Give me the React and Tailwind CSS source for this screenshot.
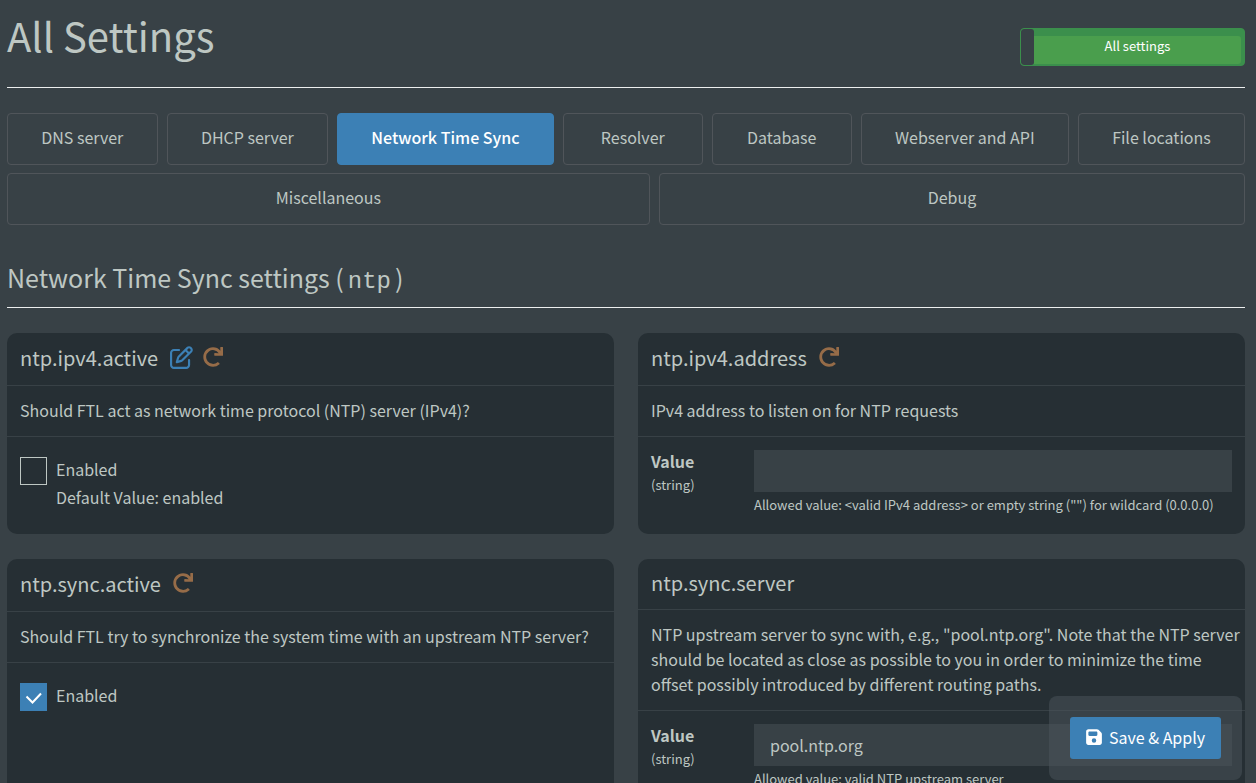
import { useState } from 'react'
import { FaRedo } from 'react-icons/fa'
import { FaFloppyDisk, FaRegPenToSquare } from 'react-icons/fa6'

const tabs = [
    'DNS server',
    'DHCP server',
    'Network Time Sync',
    'Resolver',
    'Database',
    'Webserver and API',
    'File locations',
    'Miscellaneous',
    'Debug',
]

function SettingCard({ name, description, modified, restart, children }) {
    return (
        <section className="flex min-w-0 flex-col rounded-[10px] bg-[#262f34]">
            <header className="flex items-center gap-3 border-b border-[#384146] px-[13px] pt-[11px] pb-[14px]">
                <h3 className="text-[20px] leading-[25px]">{name}</h3>
                {(modified || restart) && (
                    <span className="flex h-[27px] items-start gap-2.5 pt-0.5">
                        {modified && (
                            <FaRegPenToSquare className="h-[23px] w-[23px] text-[#3c80b5]" title="Modified from default" />
                        )}
                        {restart && <FaRedo className="mt-px h-5 w-5 text-[#966c48]" title="Requires restart" />}
                    </span>
                )}
            </header>
            <p className="border-b border-[#384146] pt-3 pr-0.5 pb-[13px] pl-[13px] text-[16px] leading-[25px]">
                {description}
            </p>
            <div className="px-[13px] pt-[13px] pb-[17px]">{children}</div>
        </section>
    )
}

function CheckboxSetting({ id, checked, note }) {
    const [on, setOn] = useState(checked)

    return (
        <div className="pt-[7px] text-[16px]">
            <div className="flex gap-[9px]">
                <span className="relative flex h-7 w-[27px]">
                    <input
                        id={id}
                        type="checkbox"
                        checked={on}
                        onChange={(e) => setOn(e.target.checked)}
                        className="peer h-7 w-[27px] appearance-none border border-[#bec7c3] checked:border-[#3c80b5] checked:bg-[#3c80b5]"
                    />
                    <svg
                        viewBox="0 0 27 28"
                        className="pointer-events-none absolute inset-0 hidden h-7 w-[27px] peer-checked:block"
                        fill="none"
                        stroke="#fff"
                        strokeWidth="2"
                    >
                        <path d="M6.5 13.5l6 6 8.5-9" />
                    </svg>
                </span>
                <label htmlFor={id} className="leading-[25px]">
                    Enabled
                </label>
            </div>
            {note && <p className="pb-[3px] pl-9 leading-[25px]">{note}</p>}
        </div>
    )
}

function TextSetting({ id, value, help }) {
    return (
        <div className="flex">
            <label htmlFor={id} className="w-[103px] shrink-0">
                <span className="block text-[16px] leading-[22px] font-bold">Value</span>
                <span className="block text-[13px] leading-[25px]">(string)</span>
            </label>
            <div className="min-w-0 flex-1">
                <input
                    id={id}
                    type="text"
                    defaultValue={value}
                    className="block h-[42px] w-full bg-[#384146] px-4 text-[16px] outline-none"
                />
                <p className="text-[13px] leading-[25px]">{help}</p>
            </div>
        </div>
    )
}

export default function App() {
    const [active, setActive] = useState('Network Time Sync')
    const [all, setAll] = useState(true)

    return (
        <main className="min-h-screen bg-[#384146] pr-[11px] pb-6 pl-[7px] font-['Noto_Sans_CJK_SC',sans-serif] text-[#bec7c3]">
            <header className="flex h-[88px] items-start justify-between border-b border-[#eceeee]">
                <h1 className="pt-2 text-[40px] leading-[54px]">All Settings</h1>

                {/* Basic / all settings toggle */}
                <label className="mt-7 flex h-[38px] w-[225px] cursor-pointer overflow-hidden rounded border border-[#3b8f4c] bg-[#3b8f4c]">
                    <input type="checkbox" checked={all} onChange={(e) => setAll(e.target.checked)} className="sr-only" />
                    <span className="w-[13px] rounded-[3px] bg-[#384146]" />
                    <span className="mt-[7px] mr-[3px] mb-px flex-1 rounded-r-[3px] bg-[#4a9e4d] text-center text-[13px] leading-[20px] text-white">
                        All settings
                    </span>
                </label>
            </header>

            <nav className="mt-[25px] flex flex-wrap gap-x-[9px] gap-y-2">
                {tabs.map((tab) => (
                    <button
                        key={tab}
                        type="button"
                        onClick={() => setActive(tab)}
                        className={
                            tab === active
                                ? 'h-[52px] min-w-[140px] grow rounded-[4px] border border-[#3c80b5] bg-[#3c80b5] px-8 pb-1 text-[16px] font-medium text-white'
                                : 'h-[52px] min-w-[140px] grow rounded-[4px] border border-[#50555a] px-8 pb-1 text-[16px]'
                        }
                    >
                        {tab}
                    </button>
                ))}
            </nav>

            <h2 className="mt-[34px] mb-[25px] border-b border-[#eceeee] pb-[7px] text-[25px] leading-9">
                Network Time Sync settings (
                <code className="px-1 font-['Liberation_Mono',monospace] text-[24px]">ntp</code>)
            </h2>

            <div className="grid grid-cols-2 gap-x-6 gap-y-[25px]">
                <SettingCard
                    name="ntp.ipv4.active"
                    description="Should FTL act as network time protocol (NTP) server (IPv4)?"
                    modified
                    restart
                >
                    <CheckboxSetting id="ipv4-active" checked={false} note="Default Value: enabled" />
                </SettingCard>
                <SettingCard name="ntp.ipv4.address" description="IPv4 address to listen on for NTP requests" restart>
                    <TextSetting
                        id="ipv4-address"
                        value=""
                        help={'Allowed value: <valid IPv4 address> or empty string ("") for wildcard (0.0.0.0)'}
                    />
                </SettingCard>
                <SettingCard
                    name="ntp.sync.active"
                    description="Should FTL try to synchronize the system time with an upstream NTP server?"
                    restart
                >
                    <CheckboxSetting id="sync-active" checked />
                </SettingCard>
                <SettingCard
                    name="ntp.sync.server"
                    description={
                        'NTP upstream server to sync with, e.g., "pool.ntp.org". Note that the NTP server should be located as close as possible to you in order to minimize the time offset possibly introduced by different routing paths.'
                    }
                >
                    <TextSetting id="sync-server" value="pool.ntp.org" help="Allowed value: valid NTP upstream server" />
                </SettingCard>
            </div>

            {/* Floating save bar */}
            <div className="fixed right-3.5 bottom-[3px] rounded-[8px] bg-[#4b555c]/50 p-[21px]">
                <button
                    type="button"
                    className="flex h-[42px] w-[151px] items-center justify-center gap-[7px] rounded-[3px] bg-[#3c80b5] pb-0.5 text-[16px] text-white"
                >
                    <FaFloppyDisk className="h-[18px] w-4" />
                    Save &amp; Apply
                </button>
            </div>
        </main>
    )
}
